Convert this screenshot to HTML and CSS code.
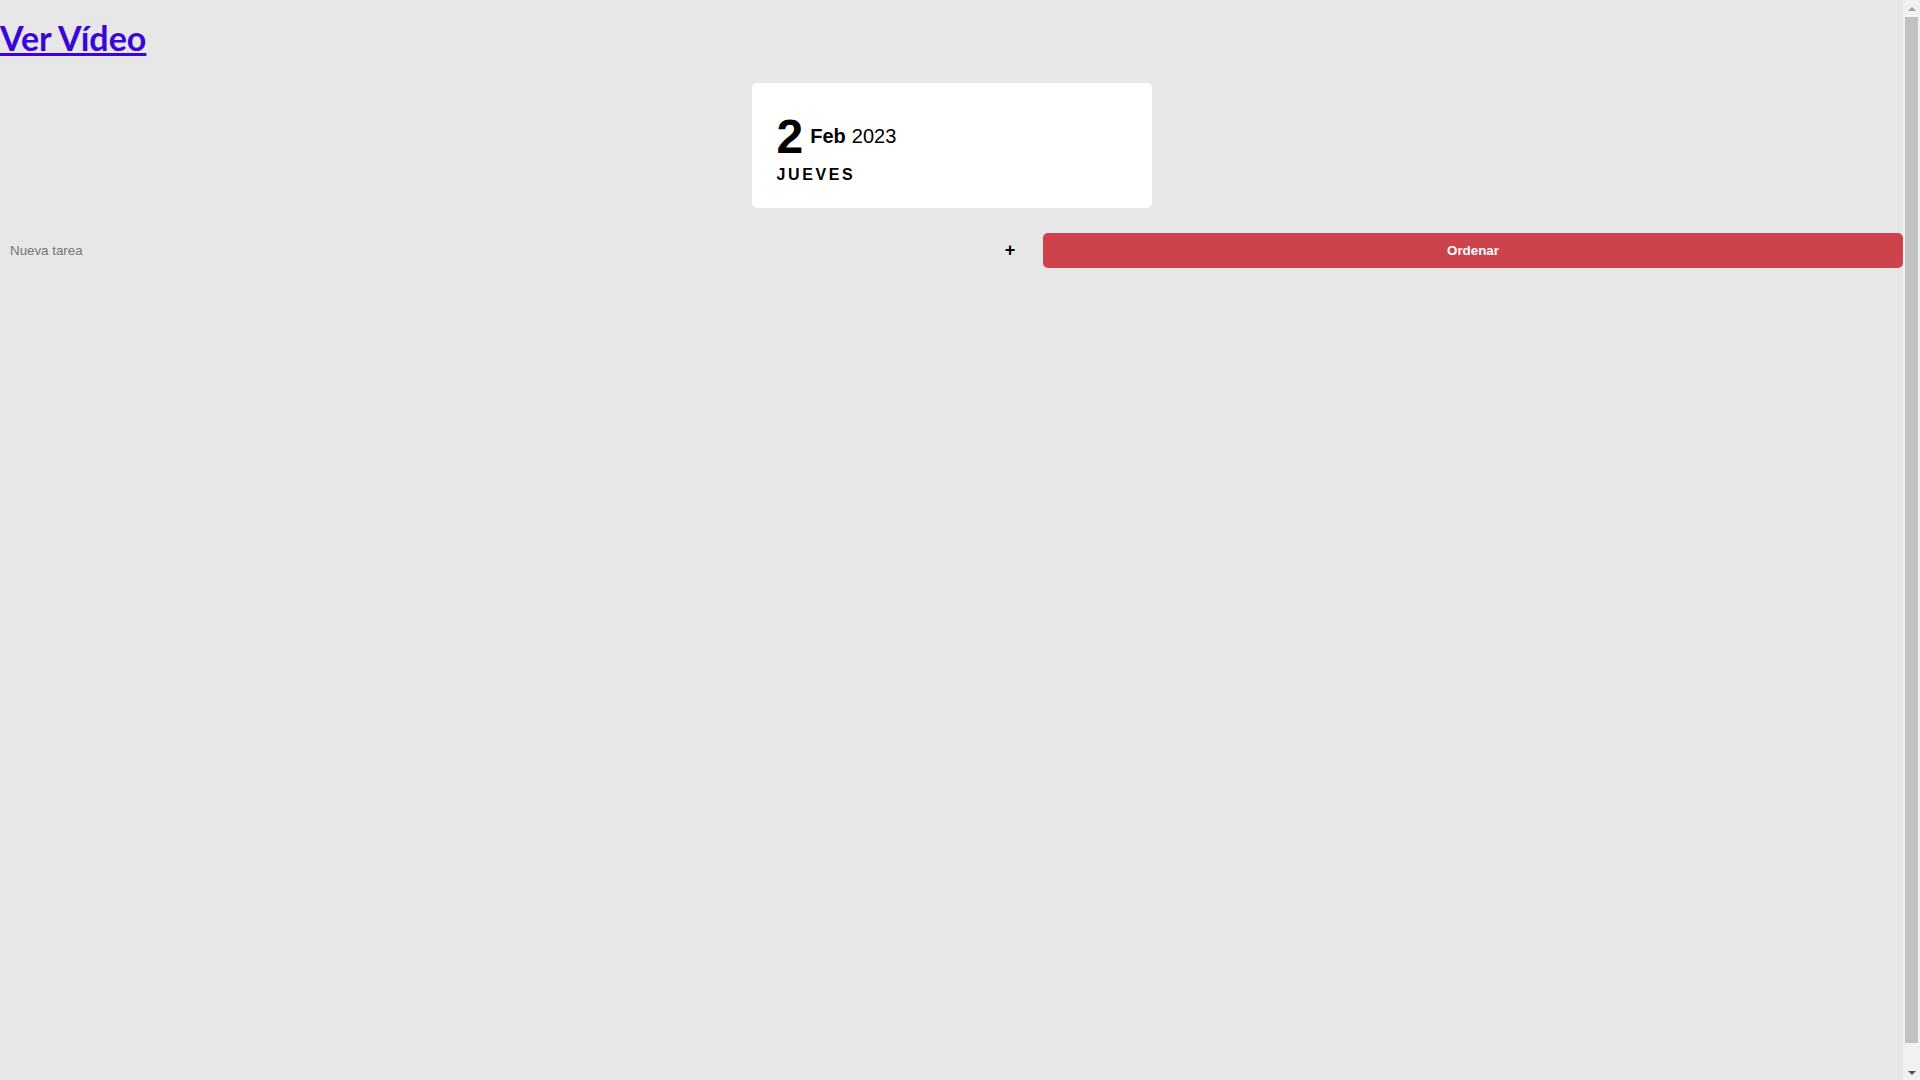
FILE: index.html
```html
<!DOCTYPE html>
<html lang="es">
<head>
<meta charset="utf-8">
<title>Tareas</title>
<link rel="stylesheet" href="styles.css">
</head>
<body>
  <main class="page">
    <h1 class="video-title"><a class="video-link" href="#">Ver Vídeo</a></h1>
    <div class="date-card">
      <div class="date-row">
        <span class="date-day">2</span>
        <span class="date-month">Feb</span>
        <span class="date-year">2023</span>
      </div>
      <div class="date-weekday">JUEVES</div>
    </div>
    <div class="toolbar">
      <form class="task-form">
        <input class="task-input" type="text" placeholder="Nueva tarea">
        <button class="task-add" type="button">+</button>
      </form>
      <button class="sort-button" type="button">Ordenar</button>
    </div>
  </main>
  <div class="scrollbar" aria-hidden="true">
    <div class="scroll-btn"><span class="arrow-up"></span></div>
    <div class="scroll-track"><div class="scroll-thumb"></div></div>
    <div class="scroll-btn"><span class="arrow-down"></span></div>
  </div>
</body>
</html>
```

FILE: styles.css
```css
html {
  background: #e7e7e7;
}

body {
  margin: 0;
  height: 100vh;
  display: flex;
  overflow: hidden;
  background: #e7e7e7;
  font-family: "Liberation Sans", Arial, sans-serif;
}

.page {
  flex: 1;
  min-width: 0;
  padding-top: 21.44px;
}

.video-title {
  margin: 0 0 27.56px;
  font-family: Lato, "Open Sans", sans-serif;
  font-size: 34px;
  font-weight: 700;
  line-height: 34px;
}

.video-link {
  color: #3a06d8;
}

.date-card {
  width: 400px;
  box-sizing: border-box;
  margin: 0 auto;
  padding: 26px 25px 24px;
  background: #ffffff;
  border-radius: 5px;
  color: #000;
}

.date-row {
  display: flex;
  align-items: center;
}

.date-day {
  font-size: 48px;
  font-weight: 700;
}

.date-month {
  margin-left: 7px;
  font-size: 20px;
  font-weight: 700;
}

.date-year {
  margin-left: 6px;
  font-size: 20px;
}

.date-weekday {
  margin-top: 2px;
  font-size: 16px;
  font-weight: 700;
  letter-spacing: 2.6px;
}

.toolbar {
  display: flex;
  margin-top: 25px;
  height: 35px;
}

.task-form {
  flex: 1;
  display: flex;
  margin: 0;
}

.task-input {
  flex: 1;
  min-width: 0;
  border: none;
  outline: none;
  background: transparent;
  padding: 0 10px;
  font-family: "Liberation Sans", Arial, sans-serif;
  font-size: 13.333px;
  color: #000;
}

.task-input::placeholder {
  color: #757575;
}

.task-add {
  width: 40px;
  margin-right: 13px;
  border: none;
  background: transparent;
  font-family: "Liberation Sans", Arial, sans-serif;
  font-size: 18px;
  font-weight: 700;
  color: #000;
  padding: 0;
}

.sort-button {
  width: 860px;
  border: none;
  border-radius: 5px;
  background: #cc434c;
  color: #ffffff;
  font-family: "Liberation Sans", Arial, sans-serif;
  font-size: 13.333px;
  font-weight: 700;
  padding: 0;
}

/* classic scrollbar strip */
.scrollbar {
  width: 17px;
  flex: none;
  display: flex;
  flex-direction: column;
  background: #f1f1f1;
}

.scroll-btn {
  height: 17px;
  flex: none;
  display: flex;
  align-items: center;
  justify-content: center;
}

.arrow-up {
  width: 0;
  height: 0;
  border-left: 4px solid transparent;
  border-right: 4px solid transparent;
  border-bottom: 4px solid #a3a3a3;
  margin-top: 1px;
}

.arrow-down {
  width: 0;
  height: 0;
  border-left: 4px solid transparent;
  border-right: 4px solid transparent;
  border-top: 4px solid #505050;
  margin-top: 2px;
}

.scroll-track {
  flex: 1;
  padding: 0 2px 20px;
  display: flex;
}

.scroll-thumb {
  flex: 1;
  background: #c1c1c1;
}
```
